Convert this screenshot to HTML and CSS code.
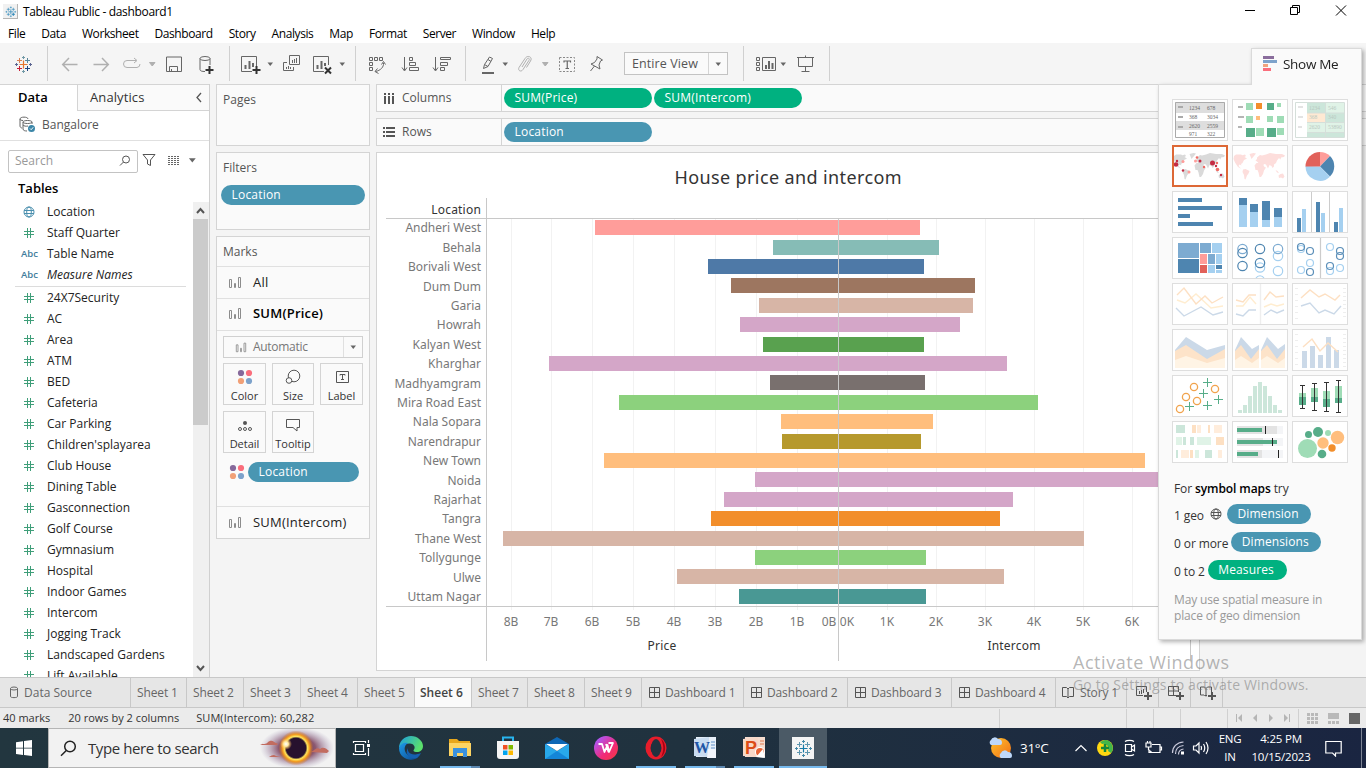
FILE: index.html
```html
<!DOCTYPE html>
<html lang="en">
<head>
<meta charset="utf-8">
<title>Tableau Public - dashboard1</title>
<link rel="stylesheet" href="styles.css">
</head>
<body>
<svg class="defs" width="0" height="0">
  <defs>
    <symbol id="tableau" viewBox="0 0 24 24">
      <g fill="none" stroke-width="1">
        <path d="M12.500 8.500v8M8.500 12.500h8" stroke="var(--a,#e8762c)" stroke-width="1.200"/>
        <path d="M8.500 6v5M6 8.500h5M16.500 14v5M14 16.500h5" stroke="var(--b,#d98052)"/>
        <path d="M16.500 6v5M14 8.500h5" stroke="var(--c,#59879b)"/>
        <path d="M8.500 14v5M6 16.500h5" stroke="var(--d,#c72037)"/>
        <path d="M16.500 14v5M14 16.500h5" stroke="var(--e,#1f447e)"/>
        <path d="M12.500 4v3M11 5.500h3M12.500 18v3M11 19.500h3" stroke="var(--f,#7199a6)"/>
        <path d="M5.500 11v3M4 12.500h3M19.500 11v3M18 12.500h3" stroke="var(--g,#5b6591)"/>
      </g>
    </symbol>
    <symbol id="caret" viewBox="0 0 8 8"><path d="M1.500 2.500h5.500L4.250 6z" fill="currentColor"/></symbol>
    <symbol id="hash" viewBox="0 0 12 12"><path d="M4.500 1v10M7.500 1v10M1 4.500h10M1 7.500h10" fill="none" stroke="#3f9e79"/></symbol>
    <symbol id="globe" viewBox="0 0 12 12"><g fill="none" stroke="currentColor"><circle cx="6" cy="6" r="5"/><ellipse cx="6" cy="6" rx="2.300" ry="5"/><path d="M1 4.500h10M1 7.500h10"/></g></symbol>
    <symbol id="bars" viewBox="0 0 14 14"><g fill="none" stroke="#8c8c8c"><path d="M1.500 4.500h2v8h-2zM6.500 8.500h1v4h-1zM10.500 2.500h2v10h-2z"/></g></symbol>
    <symbol id="colors" viewBox="0 0 16 16"><circle cx="4" cy="4" r="3.100" fill="#86699b"/><circle cx="12" cy="4" r="3.100" fill="#fa6e7c"/><circle cx="4" cy="12" r="3.100" fill="#f1a077"/><circle cx="12" cy="12" r="3.100" fill="#7da2cb"/></symbol>
    <symbol id="dash" viewBox="0 0 12 12"><path d="M.5.5h10v10H.5zM5.500.5v10M.5 5.500h10" fill="none" stroke="#555"/></symbol>
    <symbol id="book" viewBox="0 0 12 12"><path d="M6 2L4.500.500H.5v9h4L6 11l1.500-1.500h4v-9h-4zV11" fill="none" stroke="#555"/></symbol>
    <symbol id="world" viewBox="0 0 56 42">
      <path d="M2 11l2-1.500h5l1.500.8 2.500-.8 1 1.500-1.500 1 2.500 1.500-3 1.500-1.500 3-1.500 1 .5 1.500-2-1-1 1.500 2.500 2.500-3-1.500-3-4.500-1.500-3.500zM11 24.500l2.500-.5 4 2-1 2.500-1.500 2-1.500 4-1-.5-.5-4-1.500-3zM17.500 9l4-1 2.500.5-2 2.500-2.500 3-1-2.500zM23.500 15.500l1.500-1.500v-1.500l3-2.500 2 .5 4-1 4-1.500 6 1 6 0 3 1.500-1 1.500-3 .5-.5 2-1.500-1.500-2 2.500-1 2.500-2 1.500 0 2-1.500 1.500-1-2-2-1-1.500 3.500-2-4-2-.5-1 2-2.500-3-2 0-1.500-1.500zM22.500 20.500l2-2.500h4l2.500 1 1.500 3 1.500.500-2 3-1 3.500-2 3h-1.500l-1-4.500-1-2.500h-2zM43.500 25l2 1 1.500 2-2-.5zM46.500 30.500l2-1.500 2.500-.5 1.500 3-1.500 2-2-1-2 .5z" fill="currentColor"/>
    </symbol>
  </defs>
</svg>

<div class="app">
  <header class="titlebar">
    <span class="appicon"><svg width="15" height="15" style="--a:#2b87b8;--b:#2b87b8;--c:#2b87b8;--d:#2b87b8;--e:#2b87b8;--f:#3a91bd;--g:#3a91bd" stroke-width="2"><use href="#tableau"/></svg></span>
    <span class="apptitle">Tableau Public - dashboard1</span>
    <svg class="winbtns" width="136" height="22" fill="none" stroke="#000">
      <path d="M15 10.500h10"/>
      <path d="M60.500 7.500h7v7h-7zM62.500 7v-1.500h7v7H68"/>
      <path d="M106 5.500l10 10M116 5.500l-10 10"/>
    </svg>
  </header>
  <nav class="menubar"><span>File</span><span>Data</span><span>Worksheet</span><span>Dashboard</span><span>Story</span><span>Analysis</span><span>Map</span><span>Format</span><span>Server</span><span>Window</span><span>Help</span></nav>

  <div class="toolbar">
    <svg class="i m11" viewBox="0 0 24 24"><use href="#tableau"/></svg>
    <i class="sep m12"></i>
    <svg class="i m10 dim" viewBox="0 0 24 24"><path d="M19.500 12.500H5M11 6l-6.300 6.500L11 19" stroke-width="1.500"/></svg>
    <svg class="i m7 dim" viewBox="0 0 24 24"><path d="M4.500 12.500H19M13 6l6.300 6.500L13 19" stroke-width="1.500"/></svg>
    <svg class="i m7 dim" viewBox="0 0 24 24"><path d="M16 8.500H7a3.500 3.500 0 0 0 0 7h10a3.500 3.500 0 0 0 3-3.500M14 6l3 2.500-3 2.500"/></svg>
    <svg class="c m4 dim"><use href="#caret"/></svg>
    <svg class="i m6" viewBox="0 0 24 24"><path d="M4.500 5h15v14.500h-15zM7.500 19v-4.500h8V19M9.500 17v2.500"/></svg>
    <svg class="i m8" viewBox="0 0 24 24"><ellipse cx="11" cy="6.500" rx="5" ry="2"/><path d="M6 6.500v11c0 1.500 2 2 5 2M16 6.500V13"/><path d="M15.500 14v8M11.500 18h8" stroke="#333" stroke-width="2"/></svg>
    <i class="sep m11"></i>
    <svg class="i m8" viewBox="0 0 24 24"><path d="M14 19.500H3.500v-15h15V14"/><path d="M7.500 13v4M11.500 9v8M15 11v4" stroke-width="2"/><path d="M18.500 14v8M14.500 18h8" stroke="#333" stroke-width="2"/></svg>
    <svg class="c m4"><use href="#caret"/></svg>
    <svg class="i m5" viewBox="0 0 24 24"><path d="M10.500 3.500h10v9h-10zM8 10.500H4.500v8h10V15M7.500 15v2M9.500 14v3M11.500 15v2M13.500 8v3M15.500 7v4M17.500 6v5"/></svg>
    <svg class="i m7" viewBox="0 0 24 24"><path d="M14 19.500H3.500v-15h15V13"/><path d="M7.500 13v4M11.500 9v8M15 11v3" stroke-width="2"/><path d="M15 15.500l6 6M21 15.500l-6 6" stroke="#333" stroke-width="2"/></svg>
    <svg class="c m4"><use href="#caret"/></svg>
    <i class="sep m9"></i>
    <svg class="i m9" viewBox="0 0 24 24"><path d="M4.500 5.500h3v3h-3zM9.500 5.500h3v3h-3zM14.500 5.500h3v3h-3zM4.500 10.500h3v3h-3zM4.500 15.500h3v3h-3zM18.500 11c.5 4-3 7.500-8 8.500M16.500 12.500l2-3 2 3M12.500 16.500l-2.500 3 3.500 2"/></svg>
    <svg class="i m9" viewBox="0 0 24 24"><path d="M6.500 5v13M4 15.500L6.500 19 9 15.500M11.500 5.500h3v3h-3zM11.500 10.500h6v3h-6zM11.500 15.500h9v3h-9z"/></svg>
    <svg class="i m8" viewBox="0 0 24 24"><path d="M5.500 5v13M3 15.500L5.500 19 8 15.500M10.500 5.500h10v2h-10zM10.500 10.500h7v3h-7zM10.500 15.500h4v3h-4z"/></svg>
    <i class="sep m11"></i>
    <svg class="i m10" viewBox="0 0 24 24"><path d="M7.500 16.500l1-4 5-7.500 3 1.500-4.500 8zM8.500 12.500l3.500 2M12 7.500l3 2"/><path d="M6 21h12" stroke-width="2"/></svg>
    <svg class="c m1"><use href="#caret"/></svg>
    <svg class="i m4 dim" viewBox="0 0 24 24"><path d="M9 15l5-8c1.200-1.700 3-.5 2 1.300L10 17.500c-2 3-5.500 1-4-2L12 6.500c2.500-4 8-1.500 5.500 2.500l-4 6.500"/></svg>
    <svg class="c m4 dim"><use href="#caret"/></svg>
    <svg class="i m6" viewBox="0 0 24 24"><path d="M4.500 5.500h15v14h-15z" stroke-dasharray="2 1.500" stroke="#888"/><path d="M9 10.500V9h6.500v1.500M12.250 9v7.500M10.500 16.500H14" stroke-width="1.200"/></svg>
    <svg class="i m6" viewBox="0 0 24 24"><path d="M12 4.500l5.500 3.500-2 1-1.500 4 1 4-9-5 3.500-1.500L12 7zM9.500 14l-4 5"/></svg>
    <div class="viewsel m15"><span>Entire View</span><b><svg class="c"><use href="#caret"/></svg></b></div>
    <i class="sep m15"></i>
    <svg class="i m10" viewBox="0 0 24 24"><path d="M2.500 5.500h3v3h-3zM2.500 10.500h3v3h-3zM2.500 15.500h3v3h-3zM8.500 5.500h13v13h-13z"/><path d="M12 13v4M15 9v8M18.500 11v6" stroke-width="2"/></svg>
    <svg class="c m1"><use href="#caret"/></svg>
    <svg class="i m6" viewBox="0 0 24 24"><path d="M4 5.500h17M5.500 5.500v9h14v-9M12.500 14.500V19M8.500 19.500h8M12.500 3.500v2"/></svg>
    <i class="sep m12"></i>
  </div>

  <main class="main">
    <aside class="data">
      <div class="dtabs"><b>Data</b><div><span>Analytics</span><svg width="8" height="12"><path d="M6 1L2 5.500 6 10" fill="none" stroke="#555" stroke-width="1.300"/></svg></div></div>
      <div class="source">
        <svg width="17" height="17" fill="none" stroke="#666"><path d="M1 3c0-2.500 8-2.500 8 0M1 3v7c0 1 1 2 2 2M1 3c0 1 1.500 1.500 3 1.500"/><path d="M4 6c0-2 9-2 9 0v2M4 6v7c0 1.500 2 2 4 2M4 6c0 2 9 2 9 0M4 9c1 1.200 3 1.500 5 1"/><circle cx="12.500" cy="12.500" r="3.500" fill="#3b86a8" stroke="none"/><path d="M11 12.500l1.200 1.200 2-2.400" stroke="#fff"/></svg>
        <span>Bangalore</span>
      </div>
      <div class="searchrow">
        <div class="search"><span>Search</span><svg width="12" height="12" fill="none" stroke="#555"><circle cx="7" cy="4.500" r="3.500"/><path d="M4.500 7L1 10.500"/></svg></div>
        <svg class="funnel" width="14" height="14" fill="none" stroke="#555"><path d="M1 1.500h12L8.500 7v5.500l-3-1.500V7z"/></svg>
        <svg class="listic" width="12" height="11"><path d="M0 1.500h12M0 3.500h12M0 5.500h12M0 7.500h12M0 9.500h12" stroke="#666" stroke-dasharray="2 1"/></svg>
        <svg class="c big" viewBox="0 0 8 8"><use href="#caret"/></svg>
      </div>
      <div class="tables">Tables</div>
      <div class="listwrap">
        <ul class="fields">
          <li class="blue"><svg><use href="#globe"/></svg>Location</li>
          <li><svg><use href="#hash"/></svg>Staff Quarter</li>
          <li><em>Abc</em>Table Name</li>
          <li><em>Abc</em><i>Measure Names</i></li>
          <li class="rule"></li>
          <li><svg><use href="#hash"/></svg>24X7Security</li>
          <li><svg><use href="#hash"/></svg>AC</li>
          <li><svg><use href="#hash"/></svg>Area</li>
          <li><svg><use href="#hash"/></svg>ATM</li>
          <li><svg><use href="#hash"/></svg>BED</li>
          <li><svg><use href="#hash"/></svg>Cafeteria</li>
          <li><svg><use href="#hash"/></svg>Car Parking</li>
          <li><svg><use href="#hash"/></svg>Children'splayarea</li>
          <li><svg><use href="#hash"/></svg>Club House</li>
          <li><svg><use href="#hash"/></svg>Dining Table</li>
          <li><svg><use href="#hash"/></svg>Gasconnection</li>
          <li><svg><use href="#hash"/></svg>Golf Course</li>
          <li><svg><use href="#hash"/></svg>Gymnasium</li>
          <li><svg><use href="#hash"/></svg>Hospital</li>
          <li><svg><use href="#hash"/></svg>Indoor Games</li>
          <li><svg><use href="#hash"/></svg>Intercom</li>
          <li><svg><use href="#hash"/></svg>Jogging Track</li>
          <li><svg><use href="#hash"/></svg>Landscaped Gardens</li>
          <li><svg><use href="#hash"/></svg>Lift Available</li>
        </ul>
        <div class="scroll"><svg width="15" height="17"><path d="M4 11l3.500-4 3.500 4" fill="none" stroke="#555" stroke-width="2"/></svg><i></i><svg width="15" height="17"><path d="M4 6l3.500 4L11 6" fill="none" stroke="#555" stroke-width="2"/></svg></div>
      </div>
    </aside>

    <section class="cards">
      <div class="card pages">Pages</div>
      <div class="card filters">Filters<div class="pill blue">Location</div></div>
      <div class="card marks">
        <div class="mhead">Marks</div>
        <div class="mrow"><svg><use href="#bars"/></svg>All</div>
        <div class="mrow strong"><svg><use href="#bars"/></svg>SUM(Price)</div>
        <div class="mbody">
          <div class="auto"><svg width="12" height="12"><use href="#bars"/></svg><span>Automatic</span><b><svg class="c"><use href="#caret"/></svg></b></div>
          <div class="mgrid">
            <div><svg width="16" height="16"><use href="#colors"/></svg>Color</div>
            <div><svg width="16" height="16" fill="none" stroke="#555"><circle cx="9" cy="7" r="5.800"/><circle cx="4" cy="11.500" r="2.800" fill="#fafafa"/></svg>Size</div>
            <div><svg width="16" height="16" fill="none" stroke="#555"><path d="M2.500 2.500h12v11h-12zM6 6.500v-1h5v1M8.500 5.500v5M7 10.500h3"/></svg>Label</div>
            <div><svg width="16" height="16" fill="none" stroke="#555"><circle cx="8" cy="6" r="2" fill="#555" stroke="none"/><circle cx="3" cy="12" r="1.500"/><circle cx="8" cy="12" r="1.500"/><circle cx="13" cy="12" r="1.500"/></svg>Detail</div>
            <div><svg width="16" height="16" fill="none" stroke="#555"><path d="M1.500 2.500h13v8H12v3.500L8 10.500H1.500z"/></svg>Tooltip</div>
          </div>
          <div class="enc"><svg width="16" height="16"><use href="#colors"/></svg><div class="pill blue">Location</div></div>
        </div>
        <div class="mrow last"><svg><use href="#bars"/></svg>SUM(Intercom)</div>
      </div>
    </section>

    <section class="work">
      <div class="shelf"><div class="sname"><svg width="12" height="13"><path d="M2 1v2M6 1v2M10 1v2M2 4v8M6 4v8M10 4v8" stroke="#555" stroke-width="2"/></svg>Columns</div><div class="pill green">SUM(Price)</div><div class="pill green">SUM(Intercom)</div></div>
      <div class="shelf"><div class="sname"><svg width="12" height="13"><path d="M0 2h2M3 2h9M0 6h2M3 6h9M0 10h2M3 10h9" stroke="#555" stroke-width="2"/></svg>Rows</div><div class="pill blue">Location</div></div>
      <div class="sheet">
        <svg class="chart" width="822" height="517" viewBox="377 153 822 517">
          <text class="ctitle" x="788" y="184" text-anchor="middle" textLength="227">House price and intercom</text>
          <path class="grid" d="M511.500 219v391M551.500 219v391M592.500 219v391M633.500 219v391M674.500 219v391M715.500 219v391M756.500 219v391M797.500 219v391M887.500 219v391M936.500 219v391M985.500 219v391M1034.500 219v391M1083.500 219v391M1132.500 219v391"/>
          <g>
            <rect x="595" y="220" width="325" height="15" fill="#ff9d9a"/>
            <rect x="773" y="240" width="166" height="15" fill="#86bcb6"/>
            <rect x="708" y="259" width="216" height="15" fill="#4e79a7"/>
            <rect x="731" y="278" width="244" height="15" fill="#9d7660"/>
            <rect x="759" y="298" width="214" height="15" fill="#d7b5a6"/>
            <rect x="740" y="317" width="220" height="15" fill="#d4a6c8"/>
            <rect x="763" y="337" width="161" height="15" fill="#59a14f"/>
            <rect x="549" y="356" width="458" height="15" fill="#d4a6c8"/>
            <rect x="770" y="375" width="155" height="15" fill="#79706e"/>
            <rect x="619" y="395" width="419" height="15" fill="#8cd17d"/>
            <rect x="781" y="414" width="152" height="15" fill="#ffbe7d"/>
            <rect x="782" y="434" width="139" height="15" fill="#b6992d"/>
            <rect x="604" y="453" width="541" height="15" fill="#ffbe7d"/>
            <rect x="755" y="472" width="420" height="15" fill="#d4a6c8"/>
            <rect x="724" y="492" width="289" height="15" fill="#d4a6c8"/>
            <rect x="711" y="511" width="289" height="15" fill="#f28e2b"/>
            <rect x="503" y="531" width="581" height="15" fill="#d7b5a6"/>
            <rect x="755" y="550" width="171" height="15" fill="#8cd17d"/>
            <rect x="677" y="569" width="327" height="15" fill="#d7b5a6"/>
            <rect x="739" y="589" width="187" height="15" fill="#499894"/>
          </g>
          <path class="axis" d="M386 218.500h804M386 606.500h804M486.500 198v463M838.500 219v442M1190.500 198v462"/>
          <g class="rows" text-anchor="end">
            <text class="hd" x="481" y="214">Location</text>
            <text x="481" y="232">Andheri West</text><text x="481" y="252">Behala</text><text x="481" y="271">Borivali West</text><text x="481" y="291">Dum Dum</text><text x="481" y="310">Garia</text><text x="481" y="329">Howrah</text><text x="481" y="349">Kalyan West</text><text x="481" y="368">Kharghar</text><text x="481" y="388">Madhyamgram</text><text x="481" y="407">Mira Road East</text><text x="481" y="426">Nala Sopara</text><text x="481" y="446">Narendrapur</text><text x="481" y="465">New Town</text><text x="481" y="485">Noida</text><text x="481" y="504">Rajarhat</text><text x="481" y="523">Tangra</text><text x="481" y="543">Thane West</text><text x="481" y="562">Tollygunge</text><text x="481" y="582">Ulwe</text><text x="481" y="601">Uttam Nagar</text>
          </g>
          <g class="ticks" text-anchor="middle">
            <text x="511" y="626">8B</text><text x="551" y="626">7B</text><text x="592" y="626">6B</text><text x="633" y="626">5B</text><text x="674" y="626">4B</text><text x="715" y="626">3B</text><text x="756" y="626">2B</text><text x="797" y="626">1B</text><text x="829" y="626">0B</text><text x="847" y="626">0K</text><text x="887" y="626">1K</text><text x="936" y="626">2K</text><text x="985" y="626">3K</text><text x="1034" y="626">4K</text><text x="1083" y="626">5K</text><text x="1132" y="626">6K</text>
            <text class="hd" x="662" y="650">Price</text><text class="hd" x="1014" y="650">Intercom</text>
          </g>
        </svg>
      </div>
    </section>
  </main>

  <div class="tabs">
    <div class="t ds"><svg width="10" height="13" fill="none" stroke="#666"><ellipse cx="5" cy="2.500" rx="3.500" ry="1.500"/><path d="M1.500 2.500v8c0 1.500 7 1.500 7 0v-8"/></svg>Data Source</div>
    <div class="t w56">Sheet 1</div><div class="t">Sheet 2</div><div class="t">Sheet 3</div><div class="t">Sheet 4</div><div class="t">Sheet 5</div><div class="t on">Sheet 6</div><div class="t w56">Sheet 7</div><div class="t">Sheet 8</div><div class="t">Sheet 9</div>
    <div class="t w102"><svg width="12" height="12"><use href="#dash"/></svg>Dashboard 1</div>
    <div class="t w104"><svg width="12" height="12"><use href="#dash"/></svg>Dashboard 2</div>
    <div class="t w104"><svg width="12" height="12"><use href="#dash"/></svg>Dashboard 3</div>
    <div class="t w104"><svg width="12" height="12"><use href="#dash"/></svg>Dashboard 4</div>
    <div class="t w71"><svg width="12" height="12"><use href="#book"/></svg>Story 1</div>
    <div class="t w32"><svg width="16" height="16" fill="none" stroke="#555"><path d="M7 10.500H.5v-9h10V7M3.500 6v3M5.500 5v4M7.500 4v4"/><path d="M12 7v8M8 11h8" stroke-width="2"/></svg></div>
    <div class="t w32"><svg width="16" height="16" fill="none" stroke="#555"><path d="M8 10.500H.5v-9h10V7M5.500 1.500v9M.5 6h10"/><path d="M12 7v8M8 11h8" stroke-width="2"/></svg></div>
    <div class="t w32"><svg width="16" height="16" fill="none" stroke="#555"><path d="M7 10.500H4.500L4 10H.5v-8h4L6 3.500 7.500 2h4v5M6 3.500v8"/><path d="M12 7v8M8 11h8" stroke-width="2"/></svg></div>
  </div>

  <div class="status">
    <span class="s1">40 marks</span><span class="s2">20 rows by 2 columns</span><span class="s3">SUM(Intercom): 60,282</span>
    <svg width="367" height="19" viewBox="999 708 367 19">
      <path d="M999.500 708v19M1126.500 708v19M1153.500 708v19M1180.500 708v19M1227.500 708v19M1298.500 708v19" stroke="#d0d0d0"/>
      <path d="M1236 713h1v8h-1zM1242 713v8l-4-4zM1257 713v8l-4-4zM1269 713v8l4-4zM1284 713v8l4-4zM1289 713h1v8h-1z" fill="#b5b5b5"/>
      <path d="M1307 712h3v3h-3zM1311 712h3v3h-3zM1315 712h3v3h-3zM1307 716h3v3h-3zM1311 716h3v3h-3zM1315 716h3v3h-3zM1307 720h3v3h-3zM1311 720h3v3h-3zM1315 720h3v3h-3zM1328 712h11v6h-11zM1328 720h3v3h-3zM1332 720h3v3h-3zM1336 720h3v3h-3z" fill="#b9b9b9"/>
      <path d="M1349 712h11v11h-11z" fill="#666"/>
    </svg>
  </div>

  <footer class="taskbar">
    <div class="start"><svg width="16" height="16" fill="#fff"><path d="M0 2.200L7 1.200v6.500H0zM8 1l8-1v7.700H8zM0 8.500h7V15l-7-1zM8 8.500h8V16l-8-1z"/></svg></div>
    <div class="tsearch">
      <svg width="17" height="17" fill="none" stroke="#222" stroke-width="1.500"><circle cx="10" cy="6.500" r="5.300"/><path d="M6.300 10.500L1 15.800"/></svg>
      <span>Type here to search</span>
      <svg class="eclipse" width="74" height="38" viewBox="0 0 74 38">
        <defs>
          <radialGradient id="gl"><stop offset="0" stop-color="#4a234c"/><stop offset=".5" stop-color="#87516a" stop-opacity=".95"/><stop offset="1" stop-color="#a99fc0" stop-opacity="0"/></radialGradient>
          <radialGradient id="ring"><stop offset=".56" stop-color="#27112e"/><stop offset=".66" stop-color="#ffe45c"/><stop offset=".78" stop-color="#f29a1f"/><stop offset="1" stop-color="#c96826" stop-opacity="0"/></radialGradient>
          <radialGradient id="flash"><stop offset="0" stop-color="#fff"/><stop offset=".4" stop-color="#ffe9a0"/><stop offset="1" stop-color="#ffb040" stop-opacity="0"/></radialGradient>
        </defs>
        <ellipse cx="38" cy="19" rx="37" ry="21" fill="url(#gl)"/>
        <path d="M1 16c3-2 6 0 8-3 4-3 6 0 8 1 2 0 2 2 1 2zM10 28c3-2 5-3 7-1l5 1zM52 23c4-2 6-5 9-3 3-3 7 0 9 2l-2 2z" fill="#c26c60"/>
        <circle cx="37" cy="19" r="17.500" fill="url(#ring)"/>
        <circle cx="27" cy="15" r="6" fill="url(#flash)"/>
      </svg>
    </div>
    <div class="apps">
      <div><svg width="18" height="18" fill="none" stroke="#fff"><path d="M3.500 5.500h8v7h-8zM1.500 4V2.500h12V4M1.500 14v1.500h12V14M16.500 1v3M16.500 9v8" stroke-width="1.200"/><path d="M15 5h3v3h-3z" fill="#fff" stroke="none"/></svg></div>
      <div class="edge"><svg width="24" height="24"><defs><linearGradient id="e1" x1="0" y1="0" x2="1" y2=".4"><stop offset="0" stop-color="#1b9de2"/><stop offset="1" stop-color="#5be06c"/></linearGradient><linearGradient id="e2" x1="0" y1="0" x2="1" y2="1"><stop offset="0" stop-color="#1e9be8"/><stop offset="1" stop-color="#0c4a93"/></linearGradient></defs><path d="M0 12C0 5 5.500 0 12 0s12 5 12 10c0 4-3 6-6 6-3.500 0-4-1.500-3-2.500 2-3-1-6-4-6C6 7.500 2 9 0 12z" fill="url(#e1)"/><path d="M0 12c1-4 5-6 9-5-3 2-4 5-3 8 1.500 4.500 7 7 13 6.300C14 26 0 24 0 12z" fill="url(#e2)"/><path d="M9 12c-1 4 3 9 13 5-1 2-2.500 4-4 5-7 1.500-13-4-9-10z" fill="#1560b0"/></svg></div>
      <div class="run two"><svg width="24" height="24"><path d="M1 3h8l2 2h11v4H1z" fill="#e8a71c"/><path d="M1 7h22v13H1z" fill="#fdd463"/><path d="M5 12h14v9h-4v-4H9v4H5z" fill="#3b91dd"/></svg></div>
      <div><svg width="24" height="24"><path d="M7 6V1.500h10V6" fill="none" stroke="#28b4ee" stroke-width="2"/><path d="M1 5h22v15q0 3-3 3H4q-3 0-3-3z" fill="#f5f5f5"/><path d="M7 9h4.500v4.500H7z" fill="#f05022"/><path d="M12.500 9H17v4.500h-4.500z" fill="#7fba00"/><path d="M7 14.500h4.500V19H7z" fill="#00a4ef"/><path d="M12.500 14.500H17V19h-4.500z" fill="#ffb900"/></svg></div>
      <div><svg width="26" height="24"><path d="M1 8L13 1l12 7v4H1z" fill="#0e67b5"/><path d="M1 8v15h24V8L13 15z" fill="#28a8ea"/><path d="M13 15l12 8H1z" fill="#1486d8"/><path d="M2 8h22l-11 7z" fill="#fff"/></svg></div>
      <div><svg width="24" height="24"><defs><linearGradient id="w" x1="0" y1="0" x2="1" y2="1"><stop offset=".1" stop-color="#a85aff"/><stop offset=".6" stop-color="#f12a78"/><stop offset="1" stop-color="#f53b3b"/></linearGradient></defs><circle cx="12" cy="12" r="12" fill="url(#w)"/><path d="M4.500 8h3.500l2.500 8 3-7 1.500 7 4-9h-4.500M12 8l2.500 8" fill="none" stroke="#fff" stroke-width="1.800" stroke-linejoin="round"/></svg></div>
      <div class="run"><svg width="24" height="24"><ellipse cx="12" cy="12" rx="8" ry="9" fill="none" stroke="#e71d2b" stroke-width="5"/><ellipse cx="12" cy="12" rx="5" ry="9" fill="#22323f"/><path d="M17 3c5 3 6 14 0 18 3-6 3-12 0-18z" fill="#a70014"/></svg></div>
      <div class="run two"><svg width="24" height="24"><path d="M3 1h20v20H3z" fill="#e7eff8"/><path d="M1 3L16 1v20L1 20z" fill="#c9dcf1"/><path d="M18 6h4M18 9h4M18 12h4" stroke="#6292c8"/><path d="M15 13h8v9h-9z" fill="#f2f5fb"/><text x="1" y="17" class="wlogo wd">W</text></svg></div>
      <div class="run"><svg width="24" height="24"><path d="M3 1h20v20H3z" fill="#f5dccf"/><path d="M1 3L16 1v20L1 20z" fill="#f8d8c8"/><path d="M18 5h4M18 8h4" stroke="#df7b50"/><circle cx="18" cy="16" r="5" fill="#fff"/><circle cx="18" cy="16" r="4" fill="#e76335"/><path d="M14 21l7-8 2 9z" fill="#fff"/><text x="3" y="18" class="wlogo pp">P</text></svg></div>
      <div class="run cur"><svg width="24" height="24" style="--a:#147aa8;--b:#5c95ae;--c:#5c95ae;--d:#5c95ae;--e:#5c95ae;--f:#4187a5;--g:#4187a5"><path d="M1 1h22v22H1z" fill="#f4f4f4"/><use href="#tableau"/></svg></div>
    </div>
    <div class="tray">
      <svg class="wx" width="26" height="24"><defs><linearGradient id="sun" x1="0" y1="0" x2="1" y2="1"><stop offset="0" stop-color="#ffc22c"/><stop offset="1" stop-color="#f06f17"/></linearGradient></defs><circle cx="13" cy="12" r="10" fill="url(#sun)"/><path d="M3 9a3 3 0 0 1 0-5 4 4 0 0 1 7-1q4 0 4 4 0 2-2 2zM13 22a3 3 0 0 1 0-5 4 4 0 0 1 7-1q4 0 4 4 0 2-2 2z" fill="#bed8fa"/></svg>
      <span class="temp">31°C</span>
      <svg class="sys" width="136" height="24" viewBox="1074 736 136 24" fill="none" stroke="#fff" stroke-width="1.200">
        <path d="M1075.500 751l5.500-5.500 5.500 5.500"/>
        <circle cx="1105" cy="748" r="8" fill="#ffd811" stroke="none"/><path d="M1105 740a8 8 0 0 1 6 13l-3-2a5 5 0 0 0-6-7l-2-2z" fill="#42b649" stroke="none"/><path d="M1105 744v8M1101 748h8" stroke="#14873b" stroke-width="2.500"/>
        <path d="M1125.500 744.500h6v7h-6zM1131.500 747l3-2v6l-3-2M1125 741.500c2-1.500 7-1.500 9 0M1125 754.500c2 1.500 7 1.500 9 0"/>
        <path d="M1152 744.500h8v8h-11v-3M1160 747h1.500v3h-1.500M1146 743v4h5v-4zM1147.500 741v2M1150 741v2M1148.500 747v3l3 2"/>
        <g stroke="#ccd"><path d="M1172.500 753c0-6 4-10.500 11-11M1175.500 754c0-5 3-8 8-8.500M1178.500 754.500c0-3 2-5 5-5.500"/></g><path d="M1181 751.500h3v3h-3z" fill="#fff" stroke="none"/>
        <path d="M1193.500 746h2.500l3-3v10l-3-3h-2.500zM1201 746q1 2 0 4M1203.500 744q2.500 4 0 8M1206 742q4 6 0 12"/>
      </svg>
      <div class="lang">ENG<br>IN</div>
      <div class="clock">4:25 PM<br>10/15/2023</div>
      <svg class="note" width="17" height="17" fill="none" stroke="#fff" stroke-width="1.200"><path d="M.8 1.500h15.400v11.500H10.500V16l-3-3H.8z"/></svg>
      <i class="peek"></i>
    </div>
  </footer>

  <div class="watermark"><div>Activate Windows</div><p>Go to Settings to activate Windows.</p></div>

  <aside class="showme">
    <div class="smtab"><svg width="15" height="16"><path d="M0 0h11v3H0z" fill="#8a6d9c"/><path d="M0 4h14v3H0z" fill="#7ea3cb"/><path d="M0 8h5v3H0z" fill="#f0a37d"/><path d="M0 12h8v3H0z" fill="#fa6e7c"/></svg><span>Show Me</span></div>
    <div class="smbody">
      <div class="thumbs">
        <svg viewBox="0 0 56 42"><path d="M3 3h50v11H3zM3 22h50v9H3z" fill="#dedede"/><path d="M3.500 3.500h49v35h-49z" fill="none" stroke="#aaa"/><path d="M6 8h5M6 18h5M6 28h5" stroke="#aaa" stroke-width="2"/><g class="tiny" fill="#666"><text x="17" y="11">1234</text><text x="35" y="11">678</text><text x="17" y="20">368</text><text x="35" y="20">3034</text><text x="17" y="29">2620</text><text x="35" y="29">2559</text><text x="17" y="37">971</text><text x="35" y="37">322</text></g></svg>
        <svg viewBox="0 0 56 42"><path d="M6 8h5M6 18h6M6 28h4" stroke="#b5b5b5" stroke-width="2"/><path d="M14 4h7v7h-7zM45 4h4v4h-4zM14 17h7v7h-7zM35 17h6v6h-6zM45 17h7v7h-7zM24 29h8v8h-8zM45 29h7v7h-7z" fill="#9fdcb6"/><path d="M35 4h7v7h-7zM14 29h9v9h-9zM35 29h9v9h-9z" fill="#57ad89"/><path d="M24 4h6v6h-6z" fill="#f28e2b"/><path d="M24 17h4v4h-4z" fill="#ffbe7d"/></svg>
        <svg viewBox="0 0 56 42"><path d="M15 4h18v10H15zM33 14h19v9H33zM15 34h18v4H15zM33 34h19v4H33z" fill="#cce6da"/><path d="M33 4h19v10H33zM15 24h37v9H15z" fill="#e0f3e7"/><path d="M15 14h18v9H15z" fill="#ffe9d3"/><path d="M3.500 3.500h49v35h-49zM15 14h37M15 23.500h37M15 33.500h37M33.500 4v34" fill="none" stroke="#d5dfda"/><path d="M6 8h5M6 18h5M6 28h4" stroke="#e3e3e3" stroke-width="2"/><g class="tiny" fill="#b9c9c1"><text x="17" y="11">1234</text><text x="36" y="11">546</text><text x="17" y="20">368</text><text x="36" y="20">340</text><text x="17" y="30">2620</text><text x="36" y="30">53890</text></g></svg>
        <svg class="sel" viewBox="0 0 56 42"><g color="#dadada"><use href="#world"/></g><g fill="#c52b43"><circle cx="4" cy="19.500" r="2.300"/><circle cx="5" cy="16" r="1.200"/><circle cx="28" cy="16" r="1.500"/><circle cx="40.500" cy="18" r="2.500"/><circle cx="11" cy="25.500" r="1.200"/><circle cx="44" cy="21" r="1.200"/><circle cx="49" cy="30" r="1.200"/></g><g fill="#ef6b65"><circle cx="25" cy="12.500" r="1.300"/><circle cx="45" cy="18" r="1.200"/><circle cx="45.500" cy="24.500" r="1.800"/><circle cx="32" cy="22" r="1.200"/></g><g fill="#ff9d9a"><circle cx="11" cy="16.500" r="1.500"/><circle cx="17" cy="27" r="1.500"/><circle cx="23.500" cy="16" r="1.500"/></g></svg>
        <svg viewBox="0 0 56 42"><g color="#fddedc"><use href="#world"/></g></svg>
        <svg viewBox="0 0 56 42"><path d="M28 21.500V7a14.500 14.500 0 0 1 10 4z" fill="#ff9d9a"/><path d="M28 21.500L38 11a14.500 14.500 0 0 1 0 20.500z" fill="#4e85b0"/><path d="M28 21.500L38 31.800A14.500 14.500 0 0 1 13.500 21z" fill="#a5d0f0"/><path d="M28 21.500H13.500A14.500 14.500 0 0 1 28 7z" fill="#e1615a"/></svg>
        <svg viewBox="0 0 56 42"><path d="M6 7h24v4H6zM6 15h44v4H6zM6 23h12v4H6zM6 31h35v4H6z" fill="#4e85b0"/></svg>
        <svg viewBox="0 0 56 42"><path d="M7 7h8v7H7zM18 13h8v8h-8zM30 10h8v19h-8zM42 17h8v9h-8z" fill="#4e85b0"/><path d="M7 14h8v22H7zM18 21h8v15h-8zM30 29h8v7h-8zM42 26h8v10h-8z" fill="#a5d0f0"/></svg>
        <svg viewBox="0 0 56 42"><path d="M19.500 1v40M37.500 1v40" stroke="#ccc"/><path d="M5 27h4v14H5zM24 11h4v30h-4zM42 31h4v10h-4z" fill="#4e85b0"/><path d="M10 18h4v23h-4zM29 22h4v19h-4zM47 17h4v24h-4z" fill="#a5d0f0"/></svg>
        <svg viewBox="0 0 56 42"><path d="M6 6h21v15H6zM28 6h11v10H28zM36 17h7v10h-7z" fill="#7dabd1"/><path d="M6 22h21v14H6zM44 28h6v4h-6z" fill="#4e85b0"/><path d="M40 6h10v10H40zM44 17h6v10h-6zM36 28h7v8h-7zM44 33h6v3h-6z" fill="#a5d0f0"/><path d="M28 17h7v10h-7z" fill="#ff9d9a"/><path d="M28 28h7v8h-7z" fill="#e1615a"/></svg>
        <svg viewBox="0 0 56 42" fill="none" stroke-width="1.200"><g stroke="#a5d0f0"><circle cx="46" cy="19" r="4.700"/><circle cx="46" cy="34" r="4.700"/><circle cx="28" cy="30.500" r="4.700"/><path d="M24 41a4.700 4.700 0 0 1 8 0"/></g><g stroke="#7dabd1"><circle cx="10.500" cy="12" r="4.700"/><circle cx="46" cy="12" r="4.700"/></g><g stroke="#4e85b0"><circle cx="10.500" cy="16" r="4.700"/><circle cx="10.500" cy="29" r="4.700"/><circle cx="28" cy="12" r="4.700"/><circle cx="28" cy="26" r="4.700"/></g></svg>
        <svg viewBox="0 0 56 42" fill="none" stroke-width="1.200"><path d="M28.500 1v40" stroke="#ccc"/><g stroke="#a5d0f0"><circle cx="9" cy="12" r="3.500"/><circle cx="18" cy="26" r="3.500"/><circle cx="9" cy="33" r="3.500"/><circle cx="38" cy="10" r="3.500"/><circle cx="38" cy="34" r="3.500"/><circle cx="48" cy="31" r="3.500"/></g><g stroke="#5b8fb9"><circle cx="9" cy="10" r="3.500"/><circle cx="18" cy="14" r="3.500"/><circle cx="18" cy="35" r="3.500"/><circle cx="48" cy="14" r="3.500"/><circle cx="48" cy="19" r="3.500"/><circle cx="38" cy="29" r="3.500"/></g></svg>
        <svg viewBox="0 0 56 42" fill="none" stroke-width="1.400"><path d="M5 17l8 3 11-9 15 14 12-2" stroke="#ffedd0"/><path d="M5 12l7-7 12 16 9-8 7 7 11-6" stroke="#fde0c3"/><path d="M4 25l8 8 17-9 12 8 10-3" stroke="#cbd9e8"/></svg>
        <svg viewBox="0 0 56 42" fill="none" stroke-width="1.400"><path d="M28.500 1v40" stroke="#eee"/><path d="M4 23l7 0 7-9 6 7M32 24l7-3 6 2 7-2" stroke="#ffedd0"/><path d="M4 17l7 2 6-7h7M32 17l6-8 6 5 8-1" stroke="#fde0c3"/><path d="M4 31l7 2 6-6h7M32 32l7-5 6 3 7-3" stroke="#cbd9e8"/></svg>
        <svg viewBox="0 0 56 42" fill="none" stroke-width="1.400"><path d="M3 5.500h3M3 11.500h3M3 17.500h3M3 23.500h3M3 29.500h3M3 35.500h3M51 5.500h3M51 9.500h3M51 13.500h3M51 17.500h3M51 21.500h3M51 25.500h3M51 29.500h3M51 33.500h3" stroke="#eee" stroke-width="1"/><path d="M9 15l9-8 9 7 6-3 10 6 5-5" stroke="#fde0c3"/><path d="M9 23l9-3 9 10 6-3 9 4 7-8" stroke="#cbd9e8"/></svg>
        <svg viewBox="0 0 56 42"><path d="M3 21L14 8l21 13 18-5v23H3z" fill="#cbd9e8"/><path d="M3 22l11-6 21 14 18-10v19H3z" fill="#fde3c9"/><path d="M3 31l11-4 21 7 18-5v10H3z" fill="#fff4e5"/></svg>
        <svg viewBox="0 0 56 42"><path d="M3 21L9 8l11 12 7-4v23H3zM29 21l6-13 11 12 7-5v24H29z" fill="#cbd9e8"/><path d="M3 22l6-6 10 14 8-10v19H3zM29 22l6-6 10 14 8-10v19H29z" fill="#fde3c9"/><path d="M3 31l6-4 11 7 7-5v10H3zM29 31l6-4 11 7 7-5v10H29z" fill="#fff4e5"/></svg>
        <svg viewBox="0 0 56 42"><path d="M3 5.500h3M3 11.500h3M3 17.500h3M3 23.500h3M3 29.500h3M3 35.500h3M51 5.500h3M51 9.500h3M51 13.500h3M51 17.500h3M51 21.500h3M51 25.500h3M51 29.500h3M51 33.500h3M51 37.500h3" stroke="#eee"/><path d="M10 22h5v17h-5zM18 17h5v22h-5zM26 26h5v13h-5zM34 8h5v31h-5zM42 21h5v18h-5z" fill="#cbd9e8"/><path d="M11 18l9-8 8 12 8-8 10 9" fill="none" stroke="#fde0c3" stroke-width="1.400"/></svg>
        <svg viewBox="0 0 56 42" fill="none" stroke-width="1.300"><g stroke="#f1a34c"><circle cx="22" cy="12" r="3.600"/><circle cx="43" cy="14" r="3.600"/><circle cx="14" cy="22" r="3.600"/><circle cx="25" cy="26" r="3.600"/><circle cx="8" cy="34" r="3.600"/></g><path d="M35.500 3v9M31 7.500h9M31.500 14v9M27 18.500h9M46.500 20v9M42 24.500h9M17.500 27v9M13 31.500h9M35.500 26v9M31 30.500h9" stroke="#57ad89" stroke-width="1"/></svg>
        <svg viewBox="0 0 56 42"><path d="M6 35h4v3H6zM11 30h4v8h-4zM16 21h4v17h-4zM21 11h4v27h-4zM26 7h4v31h-4zM31 11h4v27h-4zM36 21h4v17h-4zM41 30h4v8h-4zM46 35h4v3h-4z" fill="#cce6da"/></svg>
        <svg viewBox="0 0 56 42"><path d="M7 18h7v4H7zM19 13h7v9h-7zM31 16h7v8h-7zM43 11h7v12h-7z" fill="#9fdcb6"/><path d="M7 22h7v8H7zM19 22h7v5h-7zM31 24h7v8h-7zM43 23h7v5h-7z" fill="#57ad89"/><path d="M10.500 10v24M22.500 8v27M34.500 7v30M46.500 5v33M8 10.500h5M8 33.500h5M20 8.500h5M20 35.500h5M32 7.500h5M32 36.500h5M44 5.500h5M44 37.500h5" stroke="#333"/></svg>
        <svg viewBox="0 0 56 42"><path d="M4 4h9v8H4zM11 16h3v8h-3zM18 16h4v8h-4zM4 29h2v8H4zM33 29h7v8h-7z" fill="#cce6da"/><path d="M4 16h6v8H4zM25 16h14v8H25zM23 29h4v8h-4z" fill="#e0f3e7"/><path d="M20 4h4v8h-4zM36 4h2v8h-2zM44 16h8v8h-8zM18 29h3v8h-3z" fill="#fde0c3"/><path d="M25 4h4v8h-4zM42 4h8v8h-8zM9 29h8v8H9zM46 29h4v8h-4z" fill="#ffeddc"/></svg>
        <svg viewBox="0 0 56 42"><path d="M5 5h46v8H5zM5 17h46v8H5zM5 29h46v8H5z" fill="#f4f5f7"/><path d="M5 5h40v8H5zM5 17h26v8H5zM5 29h25v8H5z" fill="#e3e3e3"/><path d="M5 7h25v4H5zM5 19h40v4H5zM5 31h21v4H5z" fill="#57ad89"/><path d="M33.500 5v8M40.500 17v8M46.500 29v8" stroke="#222"/></svg>
        <svg viewBox="0 0 56 42"><circle cx="15.500" cy="27.500" r="9.500" fill="#9fdcb6"/><g fill="#57ad89"><circle cx="16.500" cy="13.500" r="3.500"/><circle cx="26" cy="11" r="5"/><circle cx="30" cy="33" r="4.300"/></g><circle cx="36" cy="12" r="3" fill="#9fdcb6"/><g fill="#ffbe7d"><circle cx="45.500" cy="16.500" r="6.700"/><circle cx="31" cy="22" r="5.700"/></g><circle cx="40" cy="27" r="3.700" fill="#f28e2b"/></svg>
      </div>
      <div class="hint">For <b>symbol maps</b> try</div>
      <div class="need n1"><span>1 geo</span><svg width="12" height="12"><use href="#globe"/></svg><div class="pill blue">Dimension</div></div>
      <div class="need n2"><span>0 or more</span><div class="pill blue">Dimensions</div></div>
      <div class="need n3"><span>0 to 2</span><div class="pill green">Measures</div></div>
      <p class="may">May use spatial measure in<br>place of geo dimension</p>
    </div>
  </aside>
</div>
</body>
</html>
```
FILE: styles.css
```css
* { box-sizing: border-box; }
body { margin: 0; background: #f4f4f4; overflow: hidden; }
svg { display: block; flex: none; }
.defs { position: absolute; }
.app { position: relative; width: 1366px; height: 768px; display: flex; flex-direction: column; overflow: hidden; font: 12px/16px "Open Sans", "Noto Sans", sans-serif; color: #333; white-space: nowrap; }

.titlebar { height: 22px; background: #fff; display: flex; align-items: center; color: #000; padding-left: 3px; }
.appicon { width: 15px; height: 15px; background: #f1f1f1; border-right: 1px solid #b5b5b5; border-bottom: 1px solid #b5b5b5; margin-top: 1px; }
.apptitle { margin-left: 5px; letter-spacing: -.33px; padding-top: 2px; }
.winbtns { margin-left: auto; }
.menubar { height: 21px; background: #fff; color: #000; display: flex; padding: 4px 0 0 8px; gap: 16px; letter-spacing: -.42px; }
.toolbar { height: 41px; background: #f5f5f5; display: flex; align-items: center; color: #555; }
.i { width: 24px; height: 24px; fill: none; stroke: #666; }
.c { width: 8px; height: 8px; color: #666; }
.dim { stroke: #b0b0b0; color: #b0b0b0; }
.sep { width: 1px; height: 35px; background: #d0d0d0; flex: none; }
.m1 { margin-left: 1px; } .m4 { margin-left: 4px; } .m5 { margin-left: 5px; } .m6 { margin-left: 6px; } .m7 { margin-left: 7px; } .m8 { margin-left: 8px; } .m9 { margin-left: 9px; } .m10 { margin-left: 10px; } .m11 { margin-left: 11px; } .m12 { margin-left: 12px; } .m15 { margin-left: 15px; }
.viewsel { width: 104px; height: 23px; border: 1px solid #c3c3c3; background: #fafafa; display: flex; align-items: center; font-size: 12.500px; letter-spacing: .1px; }
.viewsel span { flex: 1; padding-left: 7px; }
.viewsel b { width: 19px; height: 21px; border-left: 1px solid #d5d5d5; display: grid; place-items: center; }

.main { height: 593px; display: flex; background: #f4f4f4; }
.data { width: 210px; border-right: 1px solid #d0d0d0; background: #fff; display: flex; flex-direction: column; overflow: hidden; }
.dtabs { height: 27px; display: flex; border-top: 1px solid #d4d4d4; font-size: 13px; line-height: 25px; color: #333; }
.dtabs > b { width: 77px; padding-left: 18px; color: #000; font-weight: 600; }
.dtabs > div { flex: 1; background: #fafafa; border-left: 1px solid #d4d4d4; border-bottom: 1px solid #d4d4d4; padding: 0 6px 0 12px; display: flex; justify-content: space-between; align-items: center; letter-spacing: .1px; }
.source { height: 30px; border-bottom: 1px solid #e0e0e0; display: flex; align-items: center; padding: 0 0 2px 19px; gap: 6px; color: #555; }
.searchrow { height: 38px; display: flex; align-items: center; padding-left: 8px; }
.search { width: 130px; height: 23px; border: 1px solid #c3c3c3; border-radius: 2px; display: flex; align-items: center; justify-content: space-between; padding: 0 6px; color: #999; margin-top: 2px; }
.funnel { margin-left: 4px; }
.listic { margin-left: 12px; }
.big { margin-left: 7px; width: 10px; height: 10px; }
.tables { height: 22px; padding: 0 0 0 18px; font-weight: 600; color: #000; font-size: 13px; line-height: 18px; }
.listwrap { flex: 1; display: flex; min-height: 0; padding-top: 1px; }
.fields { margin: -1px 0 0; padding: 0; flex: 1; list-style: none; overflow: hidden; color: #222; }
.fields li { height: 21px; line-height: 21px; display: flex; align-items: center; padding-left: 23px; }
.fields li svg { width: 12px; height: 12px; margin-right: 12px; color: #4a8fae; }
.fields em { font: 600 9.500px/21px "Open Sans", sans-serif; color: #3f7d9c; margin-left: -2px; width: 26px; }
.fields li.rule { height: 1px; border-top: 1px solid #dcdcdc; margin: 1px 7px 0 15px; }
.scroll { width: 16px; padding-right: 1px; background: #f0f0f0; display: flex; flex-direction: column; }
.scroll i { height: 206px; background: #cbcbcb; margin-bottom: auto; }

.cards { width: 154px; margin-left: 6px; display: flex; flex-direction: column; gap: 6px; color: #555; }
.card { border: 1px solid #d4d4d4; background: #fafafa; }
.pages { height: 62px; padding: 7px 6px; }
.filters { height: 78px; padding: 7px 4px 0 4px; text-indent: 2px; }
.pill { height: 20px; border-radius: 10px; line-height: 19px; color: #fff; padding-left: 10.500px; text-indent: 0; letter-spacing: .2px; }
.blue.pill { background: #4996b2; }
.green.pill { background: #00b180; }
.filters .pill { margin-top: 9px; }
.marks { height: 303px; }
.mhead { height: 29px; padding: 7px 6px; }
.mrow { height: 32px; border-top: 1px solid #e0e0e0; display: flex; align-items: center; font-size: 13px; color: #222; padding: 0 0 2px 11px; letter-spacing: .2px; }
.mrow svg { width: 14px; height: 14px; margin-right: 11px; }
.mrow.strong { font-weight: 600; color: #000; padding-bottom: 3px; }
.mbody { border-top: 1px solid #e0e0e0; height: 176px; padding: 5px 6px; }
.auto { height: 22px; border: 1px solid #d0d0d0; display: flex; align-items: center; padding-left: 11px; gap: 6px; color: #777; letter-spacing: -.3px; }
.auto span { flex: 1; }
.auto b { width: 19px; height: 20px; border-left: 1px solid #e0e0e0; display: grid; place-items: center; }
.mgrid { display: grid; grid-template-columns: 43px 42px 43px; gap: 6px; margin-top: 5px; }
.mgrid > div { height: 42px; border: 1px solid #d4d4d4; display: flex; flex-direction: column; align-items: center; justify-content: space-between; padding: 5px 0 0; font-size: 11px; line-height: 17px; color: #333; }
.enc { display: flex; align-items: center; gap: 3px; padding-left: 6px; margin-top: 9px; }
.enc .pill { width: 111px; }

.work { flex: 1; margin-left: 6px; display: flex; flex-direction: column; gap: 6px; }
.shelf { height: 28px; border: 1px solid #d4d4d4; border-right: 0; background: #fafafa; display: flex; align-items: center; gap: 2px; }
.sname { width: 125px; height: 26px; line-height: 26px; border-right: 1px solid #d4d4d4; display: flex; align-items: center; gap: 7px; padding-left: 6px; color: #555; }
.shelf .pill { width: 148px; }
.sheet { width: 824px; height: 519px; border: 1px solid #d4d4d4; background: #fff; }
.ctitle { font: 18px "Noto Sans", sans-serif; fill: #333; }
.grid { stroke: #f2f2f2; }
.axis { stroke: #c8c8c8; fill: none; }
.rows, .ticks { font: 12px "Noto Sans", sans-serif; fill: #787878; letter-spacing: 0; }
.hd { fill: #333; font-size: 12px; letter-spacing: .2px; }

.tabs { height: 31px; background: #e6e6e6; border-top: 1px solid #c8c8c8; border-bottom: 1px solid #c8c8c8; display: flex; color: #666; }
.t { width: 57px; border-right: 1px solid #c8c8c8; padding-left: 6px; display: flex; align-items: center; gap: 6px; flex: none; letter-spacing: -.13px; }
.ds { width: 131px; padding-left: 9px; gap: 5px; letter-spacing: 0; }
.on { background: #fafafa; font-weight: 600; color: #444; padding-left: 5px; letter-spacing: 0; }
.w56 { width: 56px; } .w102 { width: 102px; padding-left: 7px; gap: 4px; } .w104 { width: 104px; padding-left: 7px; gap: 4px; } .w71 { width: 71px; } .w32 { width: 32px; padding-left: 9px; }
.status { height: 20px; background: #ebebeb; display: flex; align-items: center; font-size: 11px; color: #333; padding-left: 3px; }
.s2 { margin-left: 18px; } .s3 { margin-left: 17px; letter-spacing: .05px; }
.status svg { margin-left: auto; }

.taskbar { height: 40px; background: linear-gradient(90deg, #22363f, #20323f 50%, #1a2541); display: flex; color: #fff; }
.start { width: 48px; display: grid; place-items: center; }
.tsearch { width: 288px; background: #f2f2f2; border: 1px solid #b5b5b5; display: flex; align-items: center; padding-left: 11px; font-size: 15px; color: #333; }
.tsearch span { margin-left: 11px; letter-spacing: -.4px; }
.eclipse { margin-left: auto; margin-right: 2px; }
.apps { display: flex; }
.apps > div { width: 49px; height: 40px; display: grid; place-items: center; position: relative; }
.edge svg { margin-left: 3px; }
.run::after { content: ""; position: absolute; left: 6px; bottom: 0; width: 40px; height: 2px; background: #76b9ed; }
.two::after { background: linear-gradient(90deg, #76b9ed 31px, #5c87b0 31px); }
.apps .run:not(.cur) svg { margin-left: 2px; }
.apps .cur { background: #4b5a66; width: 48px; margin-left: 2px; }
.cur::after { left: 0; width: 48px; }
.wlogo { font: bold 16px "Liberation Serif", serif; }
.wd { fill: #1f56a6; }
.pp { font: bold 18px "Liberation Sans", sans-serif; fill: #dd4c17; }
.tray { margin-left: auto; display: flex; align-items: center; }
.wx { margin-right: -1px; }
.temp { font-size: 13.500px; margin: 0 25px 0 7px; letter-spacing: -.3px; width: 29px; }
.lang, .clock { font-size: 11.500px; line-height: 18px; text-align: center; letter-spacing: -.3px; padding-bottom: 1px; }
.lang { width: 40px; }
.clock { width: 62px; letter-spacing: -.2px; }
.note { margin-left: 13px; }
.peek { width: 1px; height: 40px; background: #7d8494; margin: 0 4px 0 19px; }

.watermark { position: absolute; left: 1073px; top: 650px; color: rgba(120,120,120,.55); font-size: 18px; line-height: 24px; letter-spacing: .56px; }
.watermark p { margin: 0; font-size: 14px; line-height: 21px; letter-spacing: .18px; }

.showme { position: absolute; left: 1158px; top: 48px; width: 204px; height: 592px; filter: drop-shadow(2px 2px 2px rgba(0,0,0,.3)); }
.smtab { height: 37px; width: 111px; margin-left: auto; background: #fafafa; border: 1px solid #dadada; border-bottom: 0; display: flex; align-items: center; padding: 0 0 7px 11px; gap: 5px; font-size: 13.500px; letter-spacing: -.3px; color: #222; position: relative; z-index: 1; }
.smbody { height: 556px; margin-top: -1px; background: #fafafa; border: 1px solid #dadada; padding: 14px 13px; color: #333; }
.thumbs { display: grid; grid-template-columns: repeat(3, 56px); gap: 4px; }
.thumbs svg { width: 56px; height: 42px; background: #fff; outline: 1px solid #dedede; outline-offset: -1px; }
.thumbs .sel { outline: 2px solid #dd6836; outline-offset: -2px; }
.tiny { font: 5.500px "Liberation Serif", serif; }
.hint { margin: 18px 0 0 2px; letter-spacing: -.1px; }
.hint b { color: #000; font-weight: 600; }
.need { display: flex; align-items: center; height: 28px; padding-left: 2px; letter-spacing: -.1px; }
.need span { padding-top: 3px; }
.n1 { margin-top: 3px; }
.n1 svg { margin: 0 5px 0 6px; color: #555; }
.need .pill { width: 90px; margin-left: 3px; letter-spacing: .1px; }
.n1 .pill { width: 84px; margin-left: 0; }
.n3 .pill { width: 79px; }
.may { margin: 8px 0 0 2px; color: #999; letter-spacing: -.15px; }
```
